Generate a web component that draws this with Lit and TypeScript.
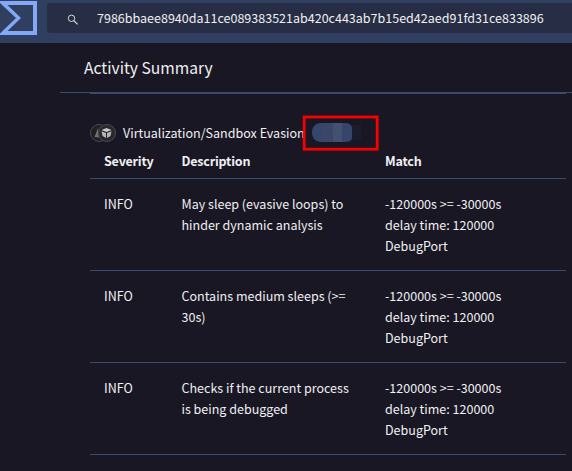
import { LitElement, html, css, svg } from "lit";
import { customElement } from "lit/decorators.js";

const HASH = "7986bbaee8940da11ce089383521ab420c443ab7b15ed42aed91fd31ce833896";
const MATCHES = ["-120000s >= -30000s", "delay time: 120000", "DebugPort"];
const ROWS = [
  ["May sleep (evasive loops) to", "hinder dynamic analysis"],
  ["Contains medium sleeps (>=", "30s)"],
  ["Checks if the current process", "is being debugged"],
];

@customElement("app-root")
export class AppRoot extends LitElement {
  static styles = css`
    :host {
      display: block;
      width: 572px;
      height: 471px;
      overflow: hidden;
      background: #181723;
      color: #f0f0f2;
      font-family: "Noto Sans CJK SC", "Noto Sans", sans-serif;
      font-size: 12.53px;
      line-height: 21px;
      white-space: nowrap;
    }
    .topbar {
      display: flex;
      height: 43px;
      background: #303f5f;
    }
    .logo {
      width: 37px;
      height: 36px;
      flex: none;
    }
    .search {
      display: flex;
      align-items: center;
      flex: 1;
      height: 30px;
      margin: 3px 0 0 10px;
      border-radius: 4px 0 0 4px;
      background: #262d44;
    }
    .glass {
      width: 12px;
      height: 12px;
      margin: 3px 18px 0 20px;
    }
    .hash {
      padding-bottom: 1px;
    }
    .title {
      height: 49px;
      margin-left: 60px;
      padding-left: 24px;
      border-bottom: 1px solid #3c4a6c;
      font-size: 15.65px;
      line-height: 50px;
    }
    .panel {
      width: 476px;
      margin-left: 90px;
      border-top: 1px solid #3c4a6c;
    }
    .heading {
      display: flex;
      align-items: center;
      height: 29px;
      padding-top: 24px;
      padding-bottom: 1px;
    }
    .badges {
      width: 27px;
      height: 20px;
      margin-right: 6px;
    }
    .redacted {
      display: block;
      position: absolute;
      left: 302px;
      top: 115px;
      width: 77px;
      height: 36px;
    }
    .row {
      display: grid;
      grid-template-columns: 77.5px 203.5px 1fr;
      height: 91px;
      box-sizing: border-box;
      padding: 14px 0 0 14px;
      box-shadow: 0 1px #3c4a6c;
      margin-bottom: 1px;
    }
    .head {
      height: 30px;
      padding-top: 2px;
      font-weight: 700;
      letter-spacing: -0.2px;
    }
  `;

  render() {
    return html`
      <div class="topbar">
        <svg class="logo" viewBox="0 0 37 36">
          <path
            d="M0 1H37V35H0V33.5L16 18L0 3ZM7.5 5L21 18L7.5 31H33V5Z"
            fill="#83a8f7"
            fill-rule="evenodd"
          />
        </svg>
        <div class="search">
          <svg class="glass" viewBox="0 0 12 12" fill="none" stroke="#d8dae2">
            <circle cx="4.5" cy="4.3" r="3.2" stroke-width="1" />
            <path d="M6.8 6.6L10.6 10.4" stroke-width="1.2" />
          </svg>
          <span class="hash">${HASH}</span>
        </div>
      </div>
      <div class="title">Activity Summary</div>
      <div class="panel">
        <div class="heading">
          <svg class="badges" viewBox="0 0 27 20">
            <circle cx="9" cy="10" r="8.5" fill="#202023" stroke="#4b4b4f" />
            <path d="M8 5L4.5 14L9 14.5Z" fill="#707074" />
            <circle cx="17" cy="10" r="8.5" fill="#28282b" stroke="#4b4b4f" />
            <path d="M11.5 7L16.5 5L21.5 7L16.5 9Z" fill="#c9c9cb" />
            <path d="M11.5 8.3L16 10V15L12.5 13Z M21.5 8.3L17 10V15L20.5 13Z" fill="#b5b5b8" />
          </svg>
          <span class="name">Virtualization/Sandbox Evasion</span>
        </div>
        <div class="row head"><span>Severity</span><span>Description</span><span>Match</span></div>
        ${ROWS.map(
          (r) => html`<div class="row">
            <span>INFO</span>
            <span>${r[0]}<br />${r[1]}</span>
            <span>${MATCHES[0]}<br />${MATCHES[1]}<br />${MATCHES[2]}</span>
          </div>`
        )}
      </div>
      <svg class="redacted" viewBox="0 0 77 36">
        ${svg`
          <rect x="50" y="10" width="9" height="15" fill="#1b1d2d" />
          <path d="M18 8H42Q50 8 50 13V23Q50 27 42 27H18Q10 26 10 17.5T18 8Z" fill="#36456a" />
          <path d="M21 8H31V27H21Z" fill="#3a4768" />
          <path d="M31 8H40V27H31Z" fill="#43506f" />
          <rect x="2.2" y="2" width="73" height="32.2" fill="none" stroke="#f80000" stroke-width="2.8" />
        `}
      </svg>
    `;
  }
}
